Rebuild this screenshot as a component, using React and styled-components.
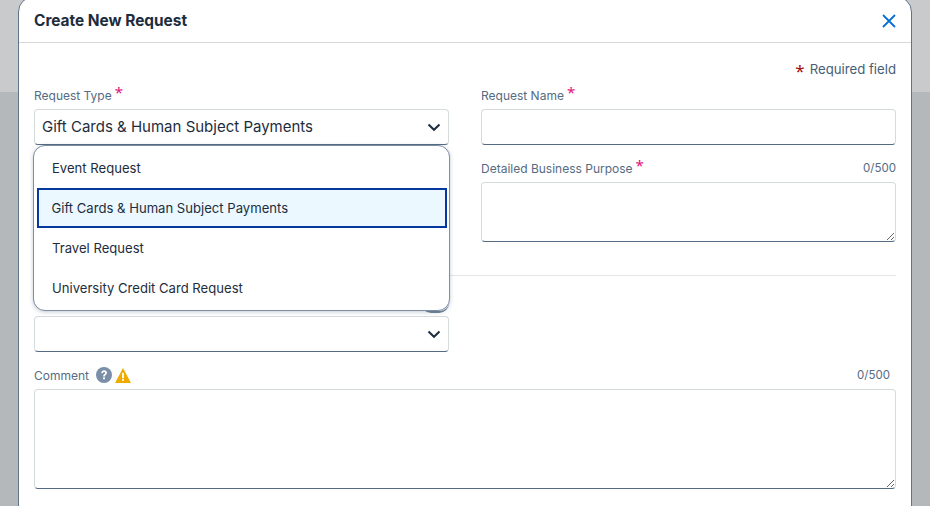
import React from 'react'
import styled, { createGlobalStyle } from 'styled-components'

const GlobalStyle = createGlobalStyle`
  html, body {
    margin: 0;
    height: 100%;
    overflow: hidden;
    font-family: Inter, "Noto Sans", "Liberation Sans", sans-serif;
  }
`

const Backdrop = styled.div`
  height: 506px;
  overflow: hidden;
  padding: 0 18px;
  box-sizing: border-box;
  background: linear-gradient(#c9cacb 0, #c9cacb 92px, #b5b8bb 92px, #b5b8bb 100%);
`

const Modal = styled.div`
  height: 540px;
  margin-top: -4px;
  background: #fff;
  border: 1px solid #5f7389;
  border-radius: 16px 16px 0 0;
  box-sizing: border-box;
`

const Header = styled.header`
  display: flex;
  align-items: center;
  justify-content: space-between;
  height: 46px;
  padding: 2px 15px 0;
  box-sizing: border-box;
  border-bottom: 1px solid #d9d9d9;
`

const Title = styled.h1`
  margin: 0;
  font-size: 15.4px;
  font-weight: 700;
  color: #1d2d3e;
`

const CloseButton = styled.button`
  display: flex;
  padding: 0;
  border: 0;
  background: none;
  color: #0a6ed1;
`

const Content = styled.div`
  padding: 17px 15px 0;
`

const RequiredNote = styled.div`
  display: flex;
  justify-content: flex-end;
  align-items: center;
  gap: 5px;
  height: 18px;
  margin-bottom: 8px;
  font-size: 13.2px;
  color: #475e75;
`

const Columns = styled.div`
  position: relative;
  display: grid;
  grid-template-columns: 415px 415px;
  column-gap: 32px;
  row-gap: 14px;
`

const Field = styled.div`
  grid-column: ${(p) => (p.$wide ? '1 / -1' : 'auto')};
`

const LabelRow = styled.div`
  display: flex;
  align-items: center;
  justify-content: space-between;
  height: 18px;
  margin-bottom: 5px;
`

const Label = styled.label`
  display: flex;
  align-items: center;
  font-size: 12px;
  color: #556b82;
`

const Star = styled.span`
  margin-left: 3px;
  margin-top: ${(p) => (p.$red ? 2 : -6)}px;
  font-family: "Noto Sans", sans-serif;
  font-size: ${(p) => (p.$red ? 17 : 15)}px;
  line-height: 1;
  color: ${(p) => (p.$red ? '#aa0808' : '#df1278')};
`

const Counter = styled.span`
  padding-right: ${(p) => p.$inset || 0}px;
  font-size: 11.5px;
  color: #556b82;
`

const controlBorder = `
  display: block;
  width: 100%;
  box-sizing: border-box;
  background: #fff;
  border: 1px solid #d5dadd;
  border-bottom-color: #556b82;
  border-radius: 4px;
  outline: none;
`

const SelectBox = styled.div`
  ${controlBorder}
  display: flex;
  align-items: center;
  justify-content: space-between;
  height: 36px;
  padding: 0 7px 1px;
  font-size: 15px;
  color: #1d2d3e;
`

const TextInput = styled.input`
  ${controlBorder}
  height: 36px;
`

const TextArea = styled.textarea`
  ${controlBorder}
  height: ${(p) => p.$h}px;
  resize: vertical;
`

const Divider = styled.hr`
  grid-column: 1 / -1;
  width: 100%;
  height: 1px;
  margin: 19px 0 3px;
  border: 0;
  background: #e5e5e5;
`

const IconRow = styled.span`
  display: flex;
  align-items: center;
  gap: 3px;
  margin-left: 7px;
`

const Peek = styled.span`
  align-self: flex-start;
  width: 28px;
  height: 20px;
  margin-left: auto;
  box-sizing: border-box;
  border-bottom: 2px solid #6f8197;
  border-radius: 0 0 10px 10px;
`

const Dropdown = styled.ul`
  position: absolute;
  top: 59px;
  left: -1px;
  width: 417px;
  height: 166px;
  margin: 0;
  padding: 2px 0 0;
  box-sizing: border-box;
  list-style: none;
  background: #fff;
  border: 1px solid #7d8ea3;
  border-radius: 12px;
  box-shadow: 0 1px 4px rgba(85, 107, 130, 0.35);
`

const Option = styled.li`
  display: flex;
  align-items: center;
  height: 40px;
  padding-left: ${(p) => (p.$selected ? 13 : 18)}px;
  margin: ${(p) => (p.$selected ? '0 2.5px' : '0')};
  box-sizing: border-box;
  font-size: 13.1px;
  color: #1d2d3e;
  background: ${(p) => (p.$selected ? '#ebf8ff' : 'transparent')};
  border: ${(p) => (p.$selected ? '2px solid #0538a0' : '0')};
`

const Chevron = () => (
  <svg width="14" height="14" viewBox="0 0 14 14" fill="none">
    <path d="M1.5 4.5 7 9.8l5.5-5.3" stroke="#1d2d3e" strokeWidth="2" />
  </svg>
)

const CloseIcon = () => (
  <svg width="14" height="14" viewBox="0 0 14 14" fill="none">
    <path d="M1 1l12 12M13 1 1 13" stroke="currentColor" strokeWidth="1.8" />
  </svg>
)

const HelpIcon = () => (
  <svg width="16" height="16" viewBox="0 0 16 16">
    <circle cx="8" cy="8" r="8" fill="#7a8ea8" />
    <path d="M5.2 6.2C5.3 4.4 6.5 3.3 8.1 3.3c1.7 0 2.9 1 2.9 2.5 0 2-2.1 1.9-2.1 3.8H7.1c0-2.6 2-2.6 2-3.7 0-.5-.4-.9-1-.9-.7 0-1.1.4-1.2 1.2z" fill="#fff" />
    <rect x="7.1" y="10.4" width="1.9" height="1.9" fill="#fff" />
  </svg>
)

const WarningIcon = () => (
  <svg width="16" height="15" viewBox="0 0 16 15">
    <path d="M8 0 16 15H0z" fill="#f0ab00" />
    <rect x="7.1" y="4.8" width="1.8" height="5.4" fill="#fff" />
    <rect x="7.1" y="11" width="1.8" height="1.8" fill="#fff" />
  </svg>
)

const requestTypes = [
  'Event Request',
  'Gift Cards & Human Subject Payments',
  'Travel Request',
  'University Credit Card Request',
]

export default function App() {
  return (
    <>
      <GlobalStyle />
      <Backdrop>
        <Modal>
          <Header>
            <Title>Create New Request</Title>
            <CloseButton aria-label="Close">
              <CloseIcon />
            </CloseButton>
          </Header>
          <Content>
            <RequiredNote>
              <Star $red>*</Star>
              Required field
            </RequiredNote>
            <Columns>
              <Field>
                <LabelRow>
                  <Label>Request Type<Star>*</Star></Label>
                </LabelRow>
                <SelectBox>
                  Gift Cards &amp; Human Subject Payments
                  <Chevron />
                </SelectBox>
              </Field>
              <Field>
                <LabelRow>
                  <Label>Request Name<Star>*</Star></Label>
                </LabelRow>
                <TextInput />
              </Field>
              <Field />
              <Field>
                <LabelRow>
                  <Label>Detailed Business Purpose<Star>*</Star></Label>
                  <Counter>0/500</Counter>
                </LabelRow>
                <TextArea $h={60} />
              </Field>
              <Divider />
              <Field>
                <LabelRow>
                  <Peek />
                </LabelRow>
                <SelectBox>
                  <span />
                  <Chevron />
                </SelectBox>
              </Field>
              <Field />
              <Field $wide>
                <LabelRow>
                  <Label>
                    Comment
                    <IconRow>
                      <HelpIcon />
                      <WarningIcon />
                    </IconRow>
                  </Label>
                  <Counter $inset={6}>0/500</Counter>
                </LabelRow>
                <TextArea $h={100} />
              </Field>
              <Dropdown>
                {requestTypes.map((name) => (
                  <Option key={name} $selected={name.startsWith('Gift')}>
                    {name}
                  </Option>
                ))}
              </Dropdown>
            </Columns>
          </Content>
        </Modal>
      </Backdrop>
    </>
  )
}
